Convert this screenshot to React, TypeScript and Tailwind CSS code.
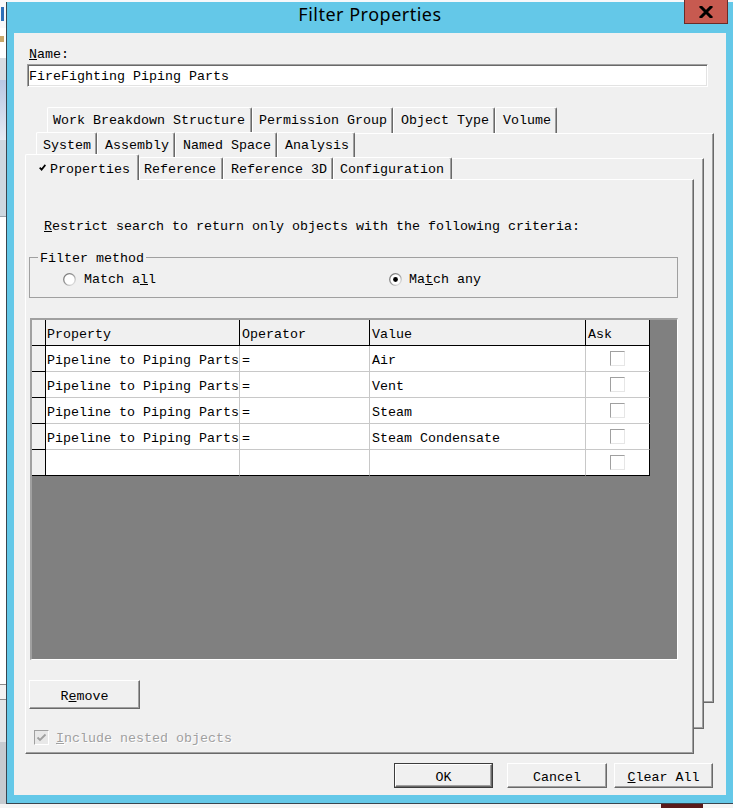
import React from 'react';

const mono =
  "font-['Liberation_Mono','DejaVu_Sans_Mono',monospace] text-[13.33px] leading-[16px] whitespace-nowrap";

// classic 3D edge used by buttons, panels and tabs
const raised =
  'border border-t-white border-l-white border-r-[#696969] border-b-[#696969] shadow-[inset_-1px_-1px_0_#a0a0a0]';

type TabDef = { label: string; cls: string };

const backTabs: TabDef[] = [
  { label: 'Work Breakdown Structure', cls: 'w-[205px] pl-[5px]' },
  { label: 'Permission Group', cls: 'w-[141px] pl-[6px]' },
  { label: 'Object Type', cls: 'w-[102px] pl-[7px]' },
  { label: 'Volume', cls: 'w-[62px] pl-[7px]' },
];

const middleTabs: TabDef[] = [
  { label: 'System', cls: 'w-[61px] pl-[6px]' },
  { label: 'Assembly', cls: 'w-[78px] pl-[7px]' },
  { label: 'Named Space', cls: 'w-[102px] pl-[7px]' },
  { label: 'Analysis', cls: 'w-[78px] pl-[7px]' },
];

const frontTabs: TabDef[] = [
  { label: 'Reference', cls: 'w-[84px] pl-[4px]' },
  { label: 'Reference 3D', cls: 'w-[110px] pl-[7px]' },
  { label: 'Configuration', cls: 'w-[119px] pl-[6px]' },
];

const criteria = [
  { prop: 'Pipeline to Piping Parts', op: '=', value: 'Air' },
  { prop: 'Pipeline to Piping Parts', op: '=', value: 'Vent' },
  { prop: 'Pipeline to Piping Parts', op: '=', value: 'Steam' },
  { prop: 'Pipeline to Piping Parts', op: '=', value: 'Steam Condensate' },
  { prop: '', op: '', value: '' },
];

function Tab({ label, cls, size }: { label: string; cls: string; size: string }) {
  return (
    <div
      className={`${mono} shrink-0 overflow-hidden rounded-t-[2px] border-t border-l border-r border-t-white border-l-white border-r-[#696969] bg-[#f0f0f0] shadow-[inset_-1px_0_0_#a0a0a0] ${cls} ${size}`}
    >
      {label}
    </div>
  );
}

function Radio({ checked }: { checked?: boolean }) {
  const id = checked ? 'rg-on' : 'rg-off';
  return (
    <svg width="13" height="13" viewBox="0 0 13 13">
      <defs>
        <linearGradient id={id} x1="0" y1="0" x2="1" y2="1">
          <stop offset="0" stopColor="#6e6e6e" />
          <stop offset="0.55" stopColor="#a0a0a0" />
          <stop offset="1" stopColor="#f4f4f4" />
        </linearGradient>
      </defs>
      <circle cx="6.5" cy="6.5" r="5.8" fill="#fff" stroke={`url(#${id})`} strokeWidth="1.3" />
      {checked && <circle cx="6.5" cy="6.5" r="2.4" fill="#000" />}
    </svg>
  );
}

function Backdrop() {
  return (
    <div className="flex w-[6px] shrink-0 flex-col">
      <div className="h-[28px] bg-[#f7f8fa] pt-[7px]">
        <div className="ml-[1px] h-[14px] w-[3px] bg-[#2e6fb8]" />
      </div>
      <div className="h-[30px] bg-white pt-[8px]">
        <div className="h-[6px] w-[4px] bg-[#c9a86a]" />
      </div>
      <div className="h-[22px] bg-[#d8dde2]" />
      <div className="h-[60px] bg-gradient-to-b from-[#b8c8e4] to-[#e6ebf3]" />
      <div className="h-[76px] bg-[#cdd8e0]" />
      <div className="h-[468px] border-t border-[#9aa4ad] bg-white" />
      <div className="h-[16px] border-y border-[#8c8c8c] bg-[#f2f2f2]" />
      <div className="h-[42px] bg-[#e4e6e8]" />
      <div className="flex-1 bg-[#c6cbd0]" />
    </div>
  );
}

function CriteriaGrid() {
  return (
    <div className="flex w-[618px] flex-col">
      <div className="flex h-[26px] bg-[#f0f0f0]">
        <div className="w-[14px] border-r border-b border-black" />
        <div className={`${mono} flex w-[194px] items-center border-r border-b border-black pl-[1px] pt-[4px]`}>Property</div>
        <div className={`${mono} flex w-[130px] items-center border-r border-b border-black pl-[2px] pt-[4px]`}>Operator</div>
        <div className={`${mono} flex w-[216px] items-center border-r border-b border-black pl-[2px] pt-[4px]`}>Value</div>
        <div className={`${mono} flex w-[64px] items-center border-r border-b border-black pl-[2px] pt-[4px]`}>Ask</div>
      </div>
      {criteria.map((row, i) => {
        const last = i === criteria.length - 1;
        const line = last ? 'border-b-black' : 'border-b-[#c8c8c8]';
        return (
          <div key={i} className="flex h-[26px]">
            <div className="w-[14px] border-r border-b border-black bg-[#f0f0f0]" />
            <div className={`${mono} flex w-[194px] items-center overflow-hidden border-r border-b border-r-[#c8c8c8] ${line} bg-white pl-[1px] pt-[4px]`}>
              {row.prop}
            </div>
            <div className={`${mono} flex w-[130px] items-center border-r border-b border-r-[#c8c8c8] ${line} bg-white pl-[2px] pt-[4px]`}>
              {row.op}
            </div>
            <div className={`${mono} flex w-[216px] items-center border-r border-b border-r-[#c8c8c8] ${line} bg-white pl-[2px] pt-[4px]`}>
              {row.value}
            </div>
            <div className={`flex w-[64px] items-center justify-center border-r border-b border-r-black ${line} bg-white`}>
              <div className="h-[15px] w-[15px] border border-t-[#a0a0a0] border-l-[#a0a0a0] border-r-[#e6e6e6] border-b-[#e6e6e6] bg-white" />
            </div>
          </div>
        );
      })}
    </div>
  );
}

function PropertiesPage() {
  return (
    <div className="flex flex-col">
      <div className={`${mono} ml-[18px] mt-[39px]`}>
        <span className="underline">R</span>estrict search to return only objects with the following criteria:
      </div>

      <fieldset className="ml-[3px] mt-[14px] w-[649px] border border-[#a0a0a0] pb-[10px]">
        <legend className={`${mono} ml-[8px] h-[16px] px-[2px] leading-[20px]`}>Filter method</legend>
        <div className="mt-[6px] flex h-[16px] items-center">
          <div className="ml-[33px] flex w-[326px] items-center gap-[8px]">
            <Radio />
            <span className={`${mono} pt-[2px]`}>
              Match a<span className="underline">l</span>l
            </span>
          </div>
          <div className="flex items-center gap-[7px]">
            <Radio checked />
            <span className={`${mono} pt-[2px]`}>
              Ma<span className="underline">t</span>ch any
            </span>
          </div>
        </div>
      </fieldset>

      <div className="ml-[4px] mt-[20px] h-[342px] w-[648px] border-t-2 border-l-2 border-r border-b border-t-[#a0a0a0] border-l-[#a0a0a0] border-r-white border-b-white bg-[#808080]">
        <CriteriaGrid />
      </div>

      <div className={`ml-[3px] mt-[20px] flex h-[29px] w-[111px] items-center justify-center bg-[#f0f0f0] ${raised}`}>
        <span className={`${mono} pt-[4px]`}>
          R<span className="underline">e</span>move
        </span>
      </div>

      <div className="ml-[8px] mt-[20px] flex h-[16px] items-center gap-[7px]">
        <div className="flex h-[15px] w-[15px] items-center justify-center border border-t-[#a0a0a0] border-l-[#a0a0a0] border-r-white border-b-white bg-[#e8e8e8]">
          <svg width="11" height="9" viewBox="0 0 11 9">
            <path d="M1.5 4.5 L4 7 L9.5 1.5" fill="none" stroke="#a0a0a0" strokeWidth="1.8" />
          </svg>
        </div>
        <span className={`${mono} pt-[4px] text-[#a0a0a0] [text-shadow:1px_1px_0_#fff]`}>
          <span className="underline">I</span>nclude nested objects
        </span>
      </div>
    </div>
  );
}

function DialogButton({ children, cls, isDefault }: { children: React.ReactNode; cls: string; isDefault?: boolean }) {
  const face = (
    <span className={`${mono} pt-[4px]`}>{children}</span>
  );
  if (isDefault) {
    return (
      <div className={`border border-[#3c3c3c] ${cls}`}>
        <div className={`flex h-full items-center justify-center bg-[#f0f0f0] ${raised}`}>{face}</div>
      </div>
    );
  }
  return <div className={`flex items-center justify-center bg-[#f0f0f0] ${raised} ${cls}`}>{face}</div>;
}

export default function App() {
  return (
    <div className="flex h-[808px] w-[733px] flex-col overflow-hidden bg-white text-black">
      <div className="flex h-[804px]">
        <Backdrop />
        <div className="flex flex-1 flex-col">
          <div className="h-[2px] bg-[#f7f8fa]" />
          <div className="flex flex-1 flex-col border-l border-b border-[#3a4650] bg-[#64c8e8]">
            {/* caption */}
            <div className="relative flex h-[31px] justify-center">
              <span className="font-['Noto_Sans','Open_Sans',sans-serif] text-[18px] leading-[24px] tracking-[0.5px]">
                Filter Properties
              </span>
              <div className="absolute -top-[2px] left-[677px] flex h-[24px] w-[44px] items-center justify-center border border-t-0 border-[#6b2b27] bg-[#c75a50]">
                <svg width="14" height="12" viewBox="0 0 14 12">
                  <path d="M2 1 L12 11 M12 1 L2 11" stroke="#000" strokeWidth="3" strokeLinecap="square" />
                </svg>
              </div>
            </div>

            {/* client area */}
            <div className="mx-[7px] flex h-[762px] flex-col bg-[#f0f0f0]">
              <div className={`${mono} ml-[15px] mt-[14px]`}>
                <span className="underline">N</span>ame:
              </div>
              <div
                className={`${mono} ml-[13px] mt-[1px] flex h-[23px] w-[681px] items-center border border-t-[#a0a0a0] border-l-[#a0a0a0] border-r-white border-b-white bg-white pl-[1px] pt-[2px] shadow-[inset_1px_1px_0_#696969,inset_-1px_-1px_0_#e3e3e3]`}
              >
                FireFighting Piping Parts
              </div>

              {/* stacked property pages */}
              <div className="mt-[20px] grid">
                <div className="col-start-1 row-start-1 ml-[22px] flex flex-col items-start self-start">
                  <div className="ml-[11px] flex">
                    {backTabs.map((t) => (
                      <Tab key={t.label} label={t.label} cls={t.cls} size="h-[26px] pt-[5px]" />
                    ))}
                  </div>
                  <div className={`h-[570px] w-[678px] bg-[#f0f0f0] ${raised}`} />
                </div>

                <div className="col-start-1 row-start-1 ml-[22px] mt-[25px] flex flex-col items-start self-start">
                  <div className="flex">
                    {middleTabs.map((t) => (
                      <Tab key={t.label} label={t.label} cls={t.cls} size="h-[26px] pt-[5px]" />
                    ))}
                  </div>
                  <div className={`h-[571px] w-[668px] bg-[#f0f0f0] ${raised}`} />
                </div>

                <div className="col-start-1 row-start-1 ml-[11px] mt-[47px] flex flex-col items-start self-start">
                  <div className="flex h-[25px] items-end">
                    <div
                      className={`${mono} relative z-10 -mb-px flex h-[26px] w-[114px] shrink-0 items-start gap-[4px] rounded-t-[2px] border-t border-l border-r border-t-white border-l-white border-r-[#696969] bg-[#f0f0f0] pl-[13px] pt-[7px] shadow-[inset_-1px_0_0_#a0a0a0]`}
                    >
                      <svg className="mt-[2px]" width="7" height="7" viewBox="0 0 7 7">
                        <path d="M0.7 3.6 L2.6 5.6 L6.4 0.9" fill="none" stroke="#000" strokeWidth="1.7" />
                      </svg>
                      Properties
                    </div>
                    {frontTabs.map((t) => (
                      <Tab key={t.label} label={t.label} cls={t.cls} size="h-[22px] pt-[4px]" />
                    ))}
                  </div>
                  <div className={`h-[575px] w-[669px] bg-[#f0f0f0] ${raised}`}>
                    <PropertiesPage />
                  </div>
                </div>
              </div>

              <div className="mt-[9px] flex">
                <DialogButton cls="ml-[380px] h-[25px] w-[99px]" isDefault>
                  OK
                </DialogButton>
                <DialogButton cls="ml-[14px] h-[25px] w-[100px]">Cancel</DialogButton>
                <DialogButton cls="ml-[7px] h-[25px] w-[99px]">
                  <span className="underline">C</span>lear All
                </DialogButton>
              </div>
            </div>
          </div>
        </div>
      </div>
      <div className="flex h-[4px] bg-[#f4f4f4]">
        <div className="ml-[661px] w-[42px] bg-[#5a1a1a]" />
      </div>
    </div>
  );
}
